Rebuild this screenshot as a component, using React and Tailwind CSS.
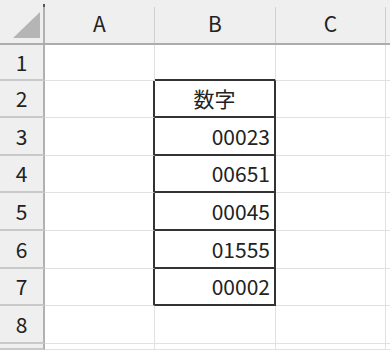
import React from "react";

const cellText = "text-[21px] leading-none text-[#222]";

const data = {
    2: { text: "数字", align: "center" },
    3: { text: "00023", align: "right" },
    4: { text: "00651", align: "right" },
    5: { text: "00045", align: "right" },
    6: { text: "01555", align: "right" },
    7: { text: "00002", align: "right" },
};

function ColHeader({ label, last }) {
    return (
        <div className="flex border-b-2 border-[#acacac] bg-[#efefef]">
            <div className={`flex flex-1 items-center justify-center pt-[4px] ${cellText}`}>{label}</div>
            {!last && <div className="mt-[7px] w-px bg-[#cfcfcf]" />}
        </div>
    );
}

function RowHeader({ n }) {
    return (
        <div
            className={`flex items-center justify-center border-r-2 border-b-2 border-r-[#b1b1b1] border-b-[#c9c9c9] bg-[#efefef] ${cellText}`}
        >
            {n}
        </div>
    );
}

function Row({ n }) {
    const inBox = n >= 2 && n <= 7;
    const cell = data[n];

    const aClass = inBox
        ? "border-r-2 border-b border-r-[#333] border-b-[#e1e1e1]"
        : "border-r border-b border-[#e1e1e1]";

    let bClass = "border-r border-b border-[#e1e1e1]";
    if (n === 1) bClass = "border-r border-b-2 border-r-[#e1e1e1] border-b-[#333]";
    if (inBox) bClass = "border-r-2 border-b-2 border-[#333]";

    return (
        <>
            <RowHeader n={n <= 8 ? n : ""} />
            <div className={`bg-white ${aClass}`} />
            <div
                className={`flex items-center bg-white ${bClass} ${cellText} ${
                    cell?.align === "center" ? "justify-center" : "justify-end pr-[4px]"
                }`}
            >
                {cell?.text}
            </div>
            <div className="border-r border-b border-[#e1e1e1] bg-white" />
            <div className="border-b border-[#e1e1e1] bg-white" />
        </>
    );
}

export default function App() {
    return (
        <div className="h-[350px] w-[390px] overflow-hidden bg-white font-['Noto_Sans_CJK_JP',sans-serif]">
            <div className="grid h-[350px] grid-cols-[45px_110px_121px_110px_1fr] grid-rows-[45px_36px_37px_38px_37px_38px_38px_37px_38px_1fr]">
                {/* corner */}
                <div className="flex border-b-2 border-[#acacac] bg-[#efefef]">
                    <div className="flex flex-1 items-start">
                        <svg width="43" height="43" viewBox="0 0 43 43" className="shrink-0">
                            <polygon points="13,38 40,38 40,12" fill="#b5b5b5" />
                        </svg>
                    </div>
                    <div className="mt-[4px] flex w-[2px] flex-col">
                        <div className="h-[3px] bg-[#555]" />
                        <div className="flex-1 bg-[#b1b1b1]" />
                    </div>
                </div>
                <ColHeader label="A" />
                <ColHeader label="B" />
                <ColHeader label="C" />
                <ColHeader label="" last />

                {[1, 2, 3, 4, 5, 6, 7, 8, 9].map((n) => (
                    <Row key={n} n={n} />
                ))}
            </div>
        </div>
    );
}
